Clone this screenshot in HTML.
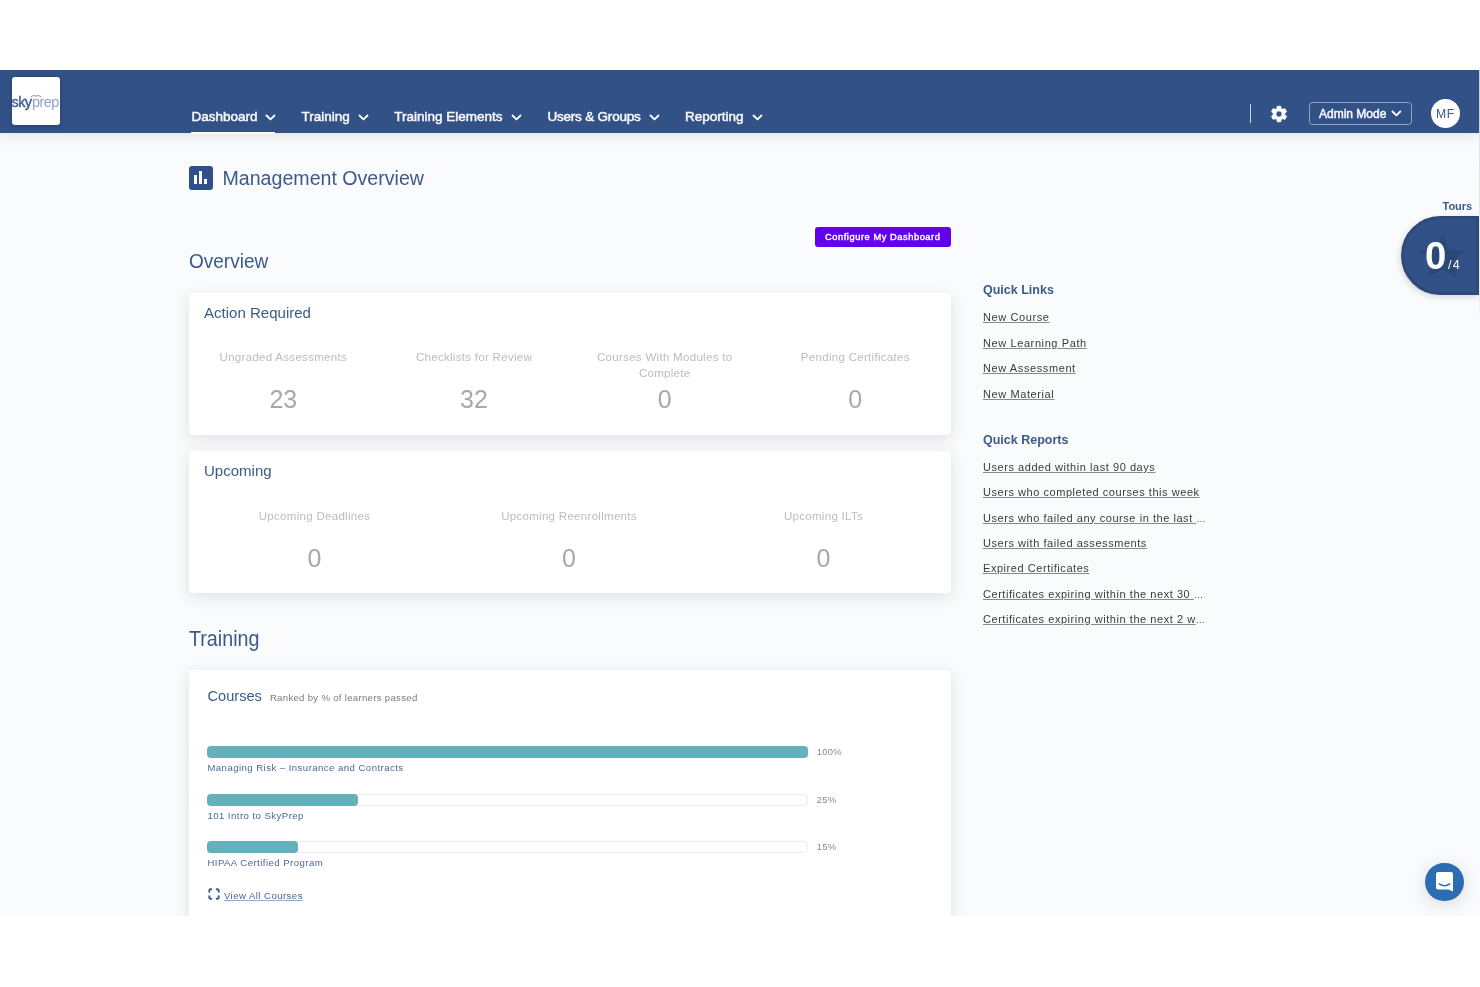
<!DOCTYPE html>
<html><head><meta charset="utf-8">
<style>
*{margin:0;padding:0;box-sizing:border-box}
html,body{width:1480px;height:987px;overflow:hidden;background:#fff;font-family:"Liberation Sans",sans-serif}
.app{position:absolute;left:0;top:70px;width:1480px;height:846px;background:#f9fbfc;overflow:hidden;filter:blur(0.45px)}
.t{position:absolute;white-space:nowrap}
.nav{position:absolute;left:0;top:0;width:1479px;height:63px;background:#325186;box-shadow:0 2px 14px rgba(0,0,0,.11)}
.card{position:absolute;left:188.6px;width:762.4px;background:#fff;border-radius:4px;box-shadow:0 4px 15px rgba(40,50,70,.12)}
.lnk{color:#444;text-decoration:underline;text-decoration-color:#888;text-underline-offset:1px}
</style></head><body>
<div class="app">
<div class="nav">
<div style="position:absolute;left:12px;top:7px;width:48px;height:48px;background:#fff;border-radius:3px;overflow:hidden;box-shadow:0 1px 5px rgba(0,0,0,.18)"><div style="position:absolute;left:-0.5px;top:17.5px;font-size:14.5px;line-height:14.5px;white-space:nowrap;letter-spacing:-0.6px"><span style="color:#45619a;-webkit-text-stroke:0.45px #45619a">sky</span><span style="color:#8fa2c3;margin-left:0.6px">prep</span></div><svg style="position:absolute;left:18px;top:16.5px" width="12" height="4" viewBox="0 0 12 4"><path d="M1 3 Q3.5 0.5 6 2.2 Q8.5 0.5 11 3" fill="none" stroke="#8fa2c3" stroke-width="1.1"/></svg></div>
<div class="t " style="left:191.5px;top:39.57px;font-size:13.5px;line-height:13.5px;color:#f6f8fb;-webkit-text-stroke:0.5px #f6f8fb;letter-spacing:0px">Dashboard</div>
<svg style="position:absolute;left:265px;top:43.599999999999994px" width="11" height="6.95" viewBox="-1 -1 11 6.95"><path d="M0.5 0.5 L4.5 4.45 L8.5 0.5" fill="none" stroke="#fff" stroke-width="1.8" stroke-linecap="round" stroke-linejoin="round"/></svg><div class="t " style="left:301.6px;top:39.57px;font-size:13.5px;line-height:13.5px;color:#f6f8fb;-webkit-text-stroke:0.5px #f6f8fb;letter-spacing:0px">Training</div>
<svg style="position:absolute;left:358px;top:43.599999999999994px" width="11" height="6.95" viewBox="-1 -1 11 6.95"><path d="M0.5 0.5 L4.5 4.45 L8.5 0.5" fill="none" stroke="#fff" stroke-width="1.8" stroke-linecap="round" stroke-linejoin="round"/></svg><div class="t " style="left:394.2px;top:39.57px;font-size:13.5px;line-height:13.5px;color:#f6f8fb;-webkit-text-stroke:0.5px #f6f8fb;letter-spacing:0px">Training Elements</div>
<svg style="position:absolute;left:511px;top:43.599999999999994px" width="11" height="6.95" viewBox="-1 -1 11 6.95"><path d="M0.5 0.5 L4.5 4.45 L8.5 0.5" fill="none" stroke="#fff" stroke-width="1.8" stroke-linecap="round" stroke-linejoin="round"/></svg><div class="t " style="left:547.4px;top:39.57px;font-size:13.5px;line-height:13.5px;color:#f6f8fb;-webkit-text-stroke:0.5px #f6f8fb;letter-spacing:-0.2px">Users &amp; Groups</div>
<svg style="position:absolute;left:649px;top:43.599999999999994px" width="11" height="6.95" viewBox="-1 -1 11 6.95"><path d="M0.5 0.5 L4.5 4.45 L8.5 0.5" fill="none" stroke="#fff" stroke-width="1.8" stroke-linecap="round" stroke-linejoin="round"/></svg><div class="t " style="left:685px;top:39.57px;font-size:13.5px;line-height:13.5px;color:#f6f8fb;-webkit-text-stroke:0.5px #f6f8fb;letter-spacing:0px">Reporting</div>
<svg style="position:absolute;left:751.6px;top:43.599999999999994px" width="11" height="6.95" viewBox="-1 -1 11 6.95"><path d="M0.5 0.5 L4.5 4.45 L8.5 0.5" fill="none" stroke="#fff" stroke-width="1.8" stroke-linecap="round" stroke-linejoin="round"/></svg><div style="position:absolute;left:191px;top:62px;width:84px;height:2.2px;background:#fff"></div><div style="position:absolute;left:1249.5px;top:34px;width:1.5px;height:19px;background:#c9d3e3"></div><svg style="position:absolute;left:1270px;top:34.6px" width="18" height="18" viewBox="0 0 18 18"><path fill="#fff" fill-rule="evenodd" stroke="#fff" stroke-width="0.5" stroke-linejoin="round" d="M6.50 3.66 L7.30 1.10 L10.70 1.10 L11.50 3.66 L12.38 4.16 L14.99 3.58 L16.69 6.52 L14.88 8.49 L14.88 9.51 L16.69 11.48 L14.99 14.42 L12.38 13.84 L11.50 14.34 L10.70 16.90 L7.30 16.90 L6.50 14.34 L5.62 13.84 L3.01 14.42 L1.31 11.48 L3.12 9.51 L3.12 8.49 L1.31 6.52 L3.01 3.58 L5.62 4.16 Z M9 6.1 A2.9 2.9 0 1 0 9 11.9 A2.9 2.9 0 1 0 9 6.1 Z"/></svg><div style="position:absolute;left:1308.5px;top:32px;width:103px;height:23px;border:1.4px solid #93a5c4;border-radius:3.5px"></div><div class="t " style="left:1319px;top:37.74px;font-size:12px;line-height:12px;color:#f6f8fb;-webkit-text-stroke:0.5px #f6f8fb">Admin Mode</div>
<svg style="position:absolute;left:1391px;top:40.3px" width="10.8" height="6.840000000000001" viewBox="-1 -1 10.8 6.840000000000001"><path d="M0.5 0.5 L4.4 4.340000000000001 L8.3 0.5" fill="none" stroke="#fff" stroke-width="1.9" stroke-linecap="round" stroke-linejoin="round"/></svg><div style="position:absolute;left:1431px;top:29px;width:29px;height:29px;border-radius:50%;background:#fff"></div><div class="t " style="left:1436px;top:37.77px;font-size:12.2px;line-height:12.2px;color:#3f5b8c;letter-spacing:0.6px">MF</div>
</div>
<div style="position:absolute;left:188.5px;top:95.5px;width:24px;height:24px;background:#31508a;border-radius:3px"><div style="position:absolute;left:5.2px;top:9.3px;width:3px;height:9.7px;background:#fff"></div><div style="position:absolute;left:10.3px;top:5.2px;width:3px;height:13.8px;background:#fff"></div><div style="position:absolute;left:15.4px;top:13.3px;width:3px;height:5.7px;background:#fff"></div></div>
<div class="t " style="left:222.5px;top:98.91px;font-size:19.6px;line-height:19.6px;color:#3b5a8b">Management Overview</div>
<div style="position:absolute;left:814.5px;top:157.2px;width:136.5px;height:20px;background:#6200ea;border-radius:3px"></div><div class="t " style="left:825px;top:162.73px;font-size:9.3px;line-height:9.3px;color:#fff;-webkit-text-stroke:0.4px #fff;letter-spacing:0.55px">Configure My Dashboard</div>
<div class="t " style="left:189px;top:180.22px;font-size:21px;line-height:21px;transform:scaleX(0.905);transform-origin:0 0;color:#3b5a8b">Overview</div>
<div class="card" style="top:222.5px;height:142px"></div>
<div class="t " style="left:204px;top:234.68px;font-size:15.5px;line-height:15.5px;transform:scaleX(0.97);transform-origin:0 0;color:#3b5a8b">Action Required</div>
<div class="t" style="left:193.3px;width:180px;text-align:center;top:279.02px;font-size:11.5px;line-height:16px;color:#bcbcbc;white-space:normal;letter-spacing:0.3px">Ungraded Assessments</div>
<div class="t" style="left:223.3px;width:120px;text-align:center;top:317.04px;font-size:25px;line-height:25px;color:#a8a8a8">23</div>
<div class="t" style="left:384px;width:180px;text-align:center;top:279.02px;font-size:11.5px;line-height:16px;color:#bcbcbc;white-space:normal;letter-spacing:0.3px">Checklists for Review</div>
<div class="t" style="left:414px;width:120px;text-align:center;top:317.04px;font-size:25px;line-height:25px;color:#a8a8a8">32</div>
<div class="t" style="left:574.7px;width:180px;text-align:center;top:279.02px;font-size:11.5px;line-height:16px;color:#bcbcbc;white-space:normal;letter-spacing:0.3px">Courses With Modules to<br>Complete</div>
<div class="t" style="left:604.7px;width:120px;text-align:center;top:317.04px;font-size:25px;line-height:25px;color:#a8a8a8">0</div>
<div class="t" style="left:765.3px;width:180px;text-align:center;top:279.02px;font-size:11.5px;line-height:16px;color:#bcbcbc;white-space:normal;letter-spacing:0.3px">Pending Certificates</div>
<div class="t" style="left:795.3px;width:120px;text-align:center;top:317.04px;font-size:25px;line-height:25px;color:#a8a8a8">0</div>
<div class="card" style="top:381.4px;height:142px"></div>
<div class="t " style="left:204px;top:393.48px;font-size:15.5px;line-height:15.5px;transform:scaleX(0.97);transform-origin:0 0;color:#3b5a8b">Upcoming</div>
<div class="t" style="left:214.5px;width:200px;text-align:center;top:437.82px;font-size:11.5px;line-height:16px;color:#bcbcbc;letter-spacing:0.3px">Upcoming Deadlines</div>
<div class="t" style="left:254.5px;width:120px;text-align:center;top:475.84px;font-size:25px;line-height:25px;color:#a8a8a8">0</div>
<div class="t" style="left:469px;width:200px;text-align:center;top:437.82px;font-size:11.5px;line-height:16px;color:#bcbcbc;letter-spacing:0.3px">Upcoming Reenrollments</div>
<div class="t" style="left:509px;width:120px;text-align:center;top:475.84px;font-size:25px;line-height:25px;color:#a8a8a8">0</div>
<div class="t" style="left:723.5px;width:200px;text-align:center;top:437.82px;font-size:11.5px;line-height:16px;color:#bcbcbc;letter-spacing:0.3px">Upcoming ILTs</div>
<div class="t" style="left:763.5px;width:120px;text-align:center;top:475.84px;font-size:25px;line-height:25px;color:#a8a8a8">0</div>
<div class="t " style="left:189px;top:558.45px;font-size:21.2px;line-height:21.2px;transform:scaleX(0.93);transform-origin:0 0;color:#3b5a8b">Training</div>
<div class="card" style="top:600.4px;height:300px"></div>
<div class="t " style="left:207.5px;top:618.64px;font-size:14.6px;line-height:14.6px;color:#3b5a8b">Courses</div>
<div class="t " style="left:269.9px;top:623.37px;font-size:9.6px;line-height:9.6px;color:#7b7b7b;letter-spacing:0.3px">Ranked by % of learners passed</div>
<div style="position:absolute;left:207px;top:676px;width:601px;height:12px;border:1px solid #ececec;border-radius:4px;background:#fff"></div><div style="position:absolute;left:207px;top:676px;width:601px;height:12px;border-radius:4px;background:#66b0be"></div><div class="t " style="left:816.7px;top:677.14px;font-size:9.4px;line-height:9.4px;color:#8a8a8a;letter-spacing:0.3px">100%</div>
<div class="t " style="left:207.4px;top:693.17px;font-size:9.6px;line-height:9.6px;color:#4f6796;letter-spacing:0.45px">Managing Risk – Insurance and Contracts</div>
<div style="position:absolute;left:207px;top:723.8px;width:601px;height:12px;border:1px solid #ececec;border-radius:4px;background:#fff"></div><div style="position:absolute;left:207px;top:723.8px;width:150.7px;height:12px;border-radius:4px;background:#66b0be"></div><div class="t " style="left:816.7px;top:724.94px;font-size:9.4px;line-height:9.4px;color:#8a8a8a;letter-spacing:0.3px">25%</div>
<div class="t " style="left:207.4px;top:740.67px;font-size:9.6px;line-height:9.6px;color:#4f6796;letter-spacing:0.45px">101 Intro to SkyPrep</div>
<div style="position:absolute;left:207px;top:771.3px;width:601px;height:12px;border:1px solid #ececec;border-radius:4px;background:#fff"></div><div style="position:absolute;left:207px;top:771.3px;width:90.80000000000001px;height:12px;border-radius:4px;background:#66b0be"></div><div class="t " style="left:816.7px;top:772.44px;font-size:9.4px;line-height:9.4px;color:#8a8a8a;letter-spacing:0.3px">15%</div>
<div class="t " style="left:207.4px;top:788.37px;font-size:9.6px;line-height:9.6px;color:#4f6796;letter-spacing:0.45px">HIPAA Certified Program</div>
<svg style="position:absolute;left:208.2px;top:818.4px" width="12" height="12" viewBox="0 0 12 12"><path d="M1.3 3.8V2.6Q1.3 1.3 2.6 1.3H3.3M8.7 1.3H9.4Q10.7 1.3 10.7 2.6V3.8M10.7 8.2V9.4Q10.7 10.7 9.4 10.7H8.7M3.3 10.7H2.6Q1.3 10.7 1.3 9.4V8.2" fill="none" stroke="#3b5a8b" stroke-width="1.9" stroke-linecap="round"/></svg><div class="t " style="left:223.9px;top:821.37px;font-size:9.6px;line-height:9.6px;color:#4a6594;letter-spacing:0.45px"><span style="text-decoration:underline;text-decoration-color:#9aabc6">View All Courses</span></div>
<div class="t " style="left:983px;top:213.92px;font-size:12.5px;line-height:12.5px;color:#3b5a8b;font-weight:700">Quick Links</div>
<div class="t " style="left:983px;top:242.49px;font-size:11px;line-height:11px;color:#3c3c3c;text-decoration:underline;text-decoration-color:#8a8a8a;letter-spacing:0.6px">New Course</div>
<div class="t " style="left:983px;top:267.99px;font-size:11px;line-height:11px;color:#3c3c3c;text-decoration:underline;text-decoration-color:#8a8a8a;letter-spacing:0.6px">New Learning Path</div>
<div class="t " style="left:983px;top:293.49px;font-size:11px;line-height:11px;color:#3c3c3c;text-decoration:underline;text-decoration-color:#8a8a8a;letter-spacing:0.6px">New Assessment</div>
<div class="t " style="left:983px;top:318.99px;font-size:11px;line-height:11px;color:#3c3c3c;text-decoration:underline;text-decoration-color:#8a8a8a;letter-spacing:0.6px">New Material</div>
<div class="t " style="left:983px;top:363.52px;font-size:12.5px;line-height:12.5px;color:#3b5a8b;font-weight:700">Quick Reports</div>
<div class="t" style="left:983px;top:389.89px;font-size:11px;color:#3c3c3c;letter-spacing:0.55px;line-height:14px"><span style="text-decoration:underline;text-decoration-color:#8a8a8a">Users added within last 90 days</span></div>
<div class="t" style="left:983px;top:415.24px;font-size:11px;color:#3c3c3c;letter-spacing:0.55px;line-height:14px"><span style="text-decoration:underline;text-decoration-color:#8a8a8a">Users who completed courses this week</span></div>
<div class="t" style="left:983px;top:440.59px;font-size:11px;color:#3c3c3c;letter-spacing:0.55px;line-height:14px"><span style="text-decoration:underline;text-decoration-color:#8a8a8a">Users who failed any course in the last </span><span style="font-size:9px;letter-spacing:0">…</span></div>
<div class="t" style="left:983px;top:465.94px;font-size:11px;color:#3c3c3c;letter-spacing:0.55px;line-height:14px"><span style="text-decoration:underline;text-decoration-color:#8a8a8a">Users with failed assessments</span></div>
<div class="t" style="left:983px;top:491.29px;font-size:11px;color:#3c3c3c;letter-spacing:0.55px;line-height:14px"><span style="text-decoration:underline;text-decoration-color:#8a8a8a">Expired Certificates</span></div>
<div class="t" style="left:983px;top:516.64px;font-size:11px;color:#3c3c3c;letter-spacing:0.55px;line-height:14px"><span style="text-decoration:underline;text-decoration-color:#8a8a8a">Certificates expiring within the next 30 </span><span style="font-size:9px;letter-spacing:0">…</span></div>
<div class="t" style="left:983px;top:541.99px;font-size:11px;color:#3c3c3c;letter-spacing:0.55px;line-height:14px"><span style="text-decoration:underline;text-decoration-color:#8a8a8a">Certificates expiring within the next 2 w</span><span style="font-size:9px;letter-spacing:0">…</span></div>
<div class="t " style="left:1442.5px;top:131.19px;font-size:11px;line-height:11px;color:#3b5a8b;font-weight:700">Tours</div>
<div style="position:absolute;left:1400.5px;top:146.2px;width:78.5px;height:78.7px;border-radius:39.4px 0 0 39.4px;background:#325186;border:3px solid #2d4a7a;box-shadow:-1px 2px 6px rgba(0,0,0,.15)"></div><svg style="position:absolute;left:1416px;top:161px" width="53" height="53" viewBox="0 0 24 24"><path fill="#2c4877" d="M12 1.5l3.1 6.6 7.1.8-5.3 4.9 1.5 7.1L12 17.3l-6.4 3.6 1.5-7.1L1.8 8.9l7.1-.8z"/></svg><div class="t " style="left:1424.8px;top:166.36px;font-size:39.5px;line-height:39.5px;color:#fff;font-weight:700;transform:scaleX(0.97);transform-origin:0 0">0</div>
<div class="t " style="left:1448px;top:188.72px;font-size:12.5px;line-height:12.5px;color:#fff;letter-spacing:1.3px">/4</div>
<div style="position:absolute;left:1479px;top:0;width:1px;height:63px;background:#c9d1de"></div><div style="position:absolute;left:1479px;top:63px;width:1px;height:185px;background:linear-gradient(#e0e4ea,#e6e9ee 85%,rgba(230,233,238,0))"></div><div style="position:absolute;left:1425px;top:792.5px;width:38.5px;height:38.5px;border-radius:50%;background:#2b6cb3;box-shadow:0 3px 18px rgba(0,0,0,.14)"></div><svg style="position:absolute;left:1435px;top:801px" width="20" height="22" viewBox="0 0 20 22"><path fill="#fff" d="M3 1H16Q18 1 18 3V20.5L13.5 18.6H3Q1 18.6 1 16.6V3Q1 1 3 1Z"/><path d="M4.3 12.9Q9.5 16.6 14.7 12.9" fill="none" stroke="#2b6cb3" stroke-width="1.6" stroke-linecap="round"/></svg></div>
</body></html>
